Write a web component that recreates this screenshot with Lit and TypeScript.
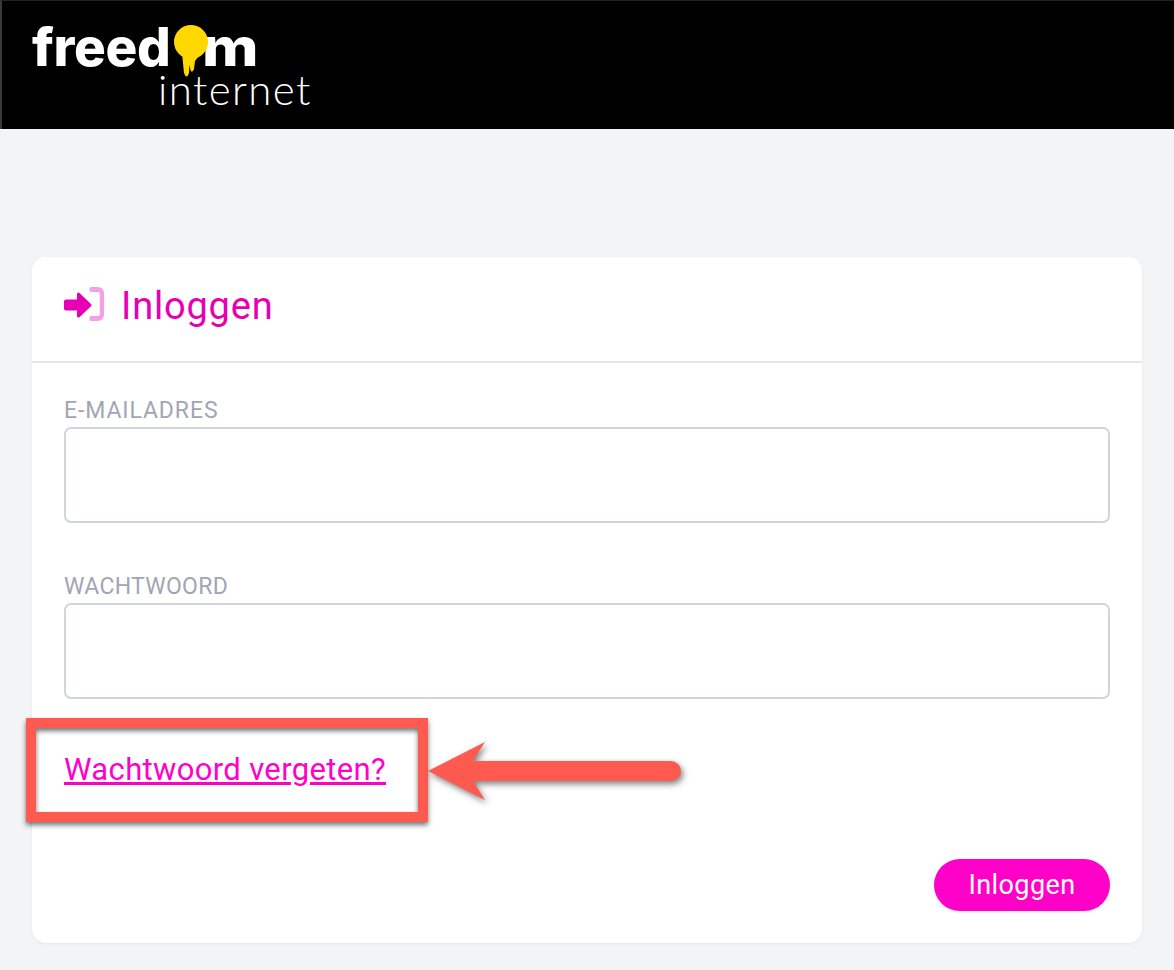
import { LitElement, html, css } from "lit";
import { customElement } from "lit/decorators.js";

@customElement("app-root")
export class AppRoot extends LitElement {
  static styles = css`
    :host { display: block; }
    .page { position: relative; height: 970px; background: #f3f4f6; font-family: Roboto, "Noto Sans", sans-serif; overflow: hidden; }
    .top { height: 129px; box-sizing: border-box; background: #000; border-left: 2px solid #3a3a3a; border-top: 1px solid #222; padding: 22px 0 0 30px; position: relative; color: #fff; }
    .logo-main { display: flex; font-family: Inter, sans-serif; font-weight: 800; font-size: 53px; line-height: 48px; letter-spacing: -0.3px; }
    .o { display: inline-block; width: 32px; }
    .m { display: inline-block; transform: scaleX(1.15); transform-origin: left center; }
    .blob { position: absolute; left: 169px; top: 22px; }
    .logo-sub { margin: 1px 0 0 126px; font-family: Lato, sans-serif; font-weight: 300; font-size: 42px; line-height: 34px; letter-spacing: 1.4px; }
    main { padding: 128px 32px 0; }
    .card { height: 686px; box-sizing: border-box; background: #fff; border-radius: 14px; box-shadow: 0 1px 3px rgba(0,0,0,.06); display: flex; flex-direction: column; }
    .head { height: 104px; border-bottom: 2px solid #e5e7eb; display: flex; align-items: center; gap: 17px; padding: 0 32px; flex: none; }
    .head svg { margin-bottom: 10px; }
    .head h1 { margin: 0 0 7px; font-weight: 400; font-size: 38px; line-height: 48px; color: #e600b4; letter-spacing: .8px; }
    .body { padding: 33px 32px 32px; display: flex; flex-direction: column; flex: 1; }
    label { display: block; font-size: 23px; line-height: 30px; color: #a1a6b4; letter-spacing: .9px; height: 31px; }
    label.tight { letter-spacing: .3px; }
    .input { height: 96px; box-sizing: border-box; border: 2px solid #d1d5db; border-radius: 7px; background: #fff; margin-bottom: 49px; }
    .link { font-size: 31px; line-height: 40px; color: #ff00c8; text-decoration: underline; letter-spacing: .35px; margin-top: 2px; align-self: flex-start; }
    .foot { margin-top: auto; display: flex; justify-content: flex-end; }
    button { width: 176px; height: 52px; border: 0; border-radius: 26px; background: #ff00c8; color: #fff; font: inherit; font-size: 27px; letter-spacing: .4px; box-shadow: 0 1px 3px rgba(0,0,0,.08); padding: 0; }
    .box { position: absolute; left: 26px; top: 718px; width: 402px; height: 104px; box-sizing: border-box; border: 10px solid #ff5a4f; box-shadow: 0 3px 5px rgba(0,0,0,.55), inset 0 3px 5px rgba(0,0,0,.55); pointer-events: none; }
    .arrow { position: absolute; left: 420px; top: 730px; overflow: visible; filter: drop-shadow(2px 3px 3px rgba(0,0,0,.5)); }
  `;

  render() {
    return html`
      <div class="page">
        <div class="top">
          <div class="logo-main"><span>freed</span><span class="o"></span><span class="m">m</span></div>
          <svg class="blob" width="40" height="60" viewBox="0 0 40 60">
            <circle cx="20" cy="19" r="17" fill="#ffd800"/>
            <path d="M11 30 L13 50 Q15.500 57 18 50 L18.500 42 L19.500 47 Q21 51 23 46 L24 38 L27 34 Z" fill="#ffd800"/>
          </svg>
          <div class="logo-sub">internet</div>
        </div>
        <main>
          <section class="card">
            <div class="head">
              <svg width="40" height="36" viewBox="0 0 40 36">
                <path d="M27 1h7a6 6 0 0 1 6 6v22a6 6 0 0 1-6 6h-7a1.500 1.500 0 0 1-1.500-1.500v-2a1.500 1.500 0 0 1 1.500-1.500h7a1.800 1.800 0 0 0 1.800-1.800V7.800A1.800 1.800 0 0 0 34 6h-7a1.500 1.500 0 0 1-1.500-1.500v-2A1.500 1.500 0 0 1 27 1z" fill="#f79fe3"/>
                <path d="M0 15.500a2 2 0 0 1 2-2h11V8a1.500 1.500 0 0 1 2.500-1.100l11.500 11a1.600 1.600 0 0 1 0 2.300l-11.500 11A1.500 1.500 0 0 1 13 30v-5.500H2a2 2 0 0 1-2-2z" fill="#e600b4"/>
              </svg>
              <h1>Inloggen</h1>
            </div>
            <div class="body">
              <label>E-MAILADRES</label>
              <div class="input"></div>
              <label class="tight">WACHTWOORD</label>
              <div class="input"></div>
              <a class="link">Wachtwoord vergeten?</a>
              <div class="foot"><button>Inloggen</button></div>
            </div>
          </section>
        </main>
        <div class="box"></div>
        <svg class="arrow" width="270" height="80" viewBox="0 0 270 80">
          <path d="M8 41 L65 12 L53 31 L251 31 A10 10 0 0 1 251 51 L53 51 L65 70 Z" fill="#ff5a4f"/>
        </svg>
      </div>
    `;
  }
}
